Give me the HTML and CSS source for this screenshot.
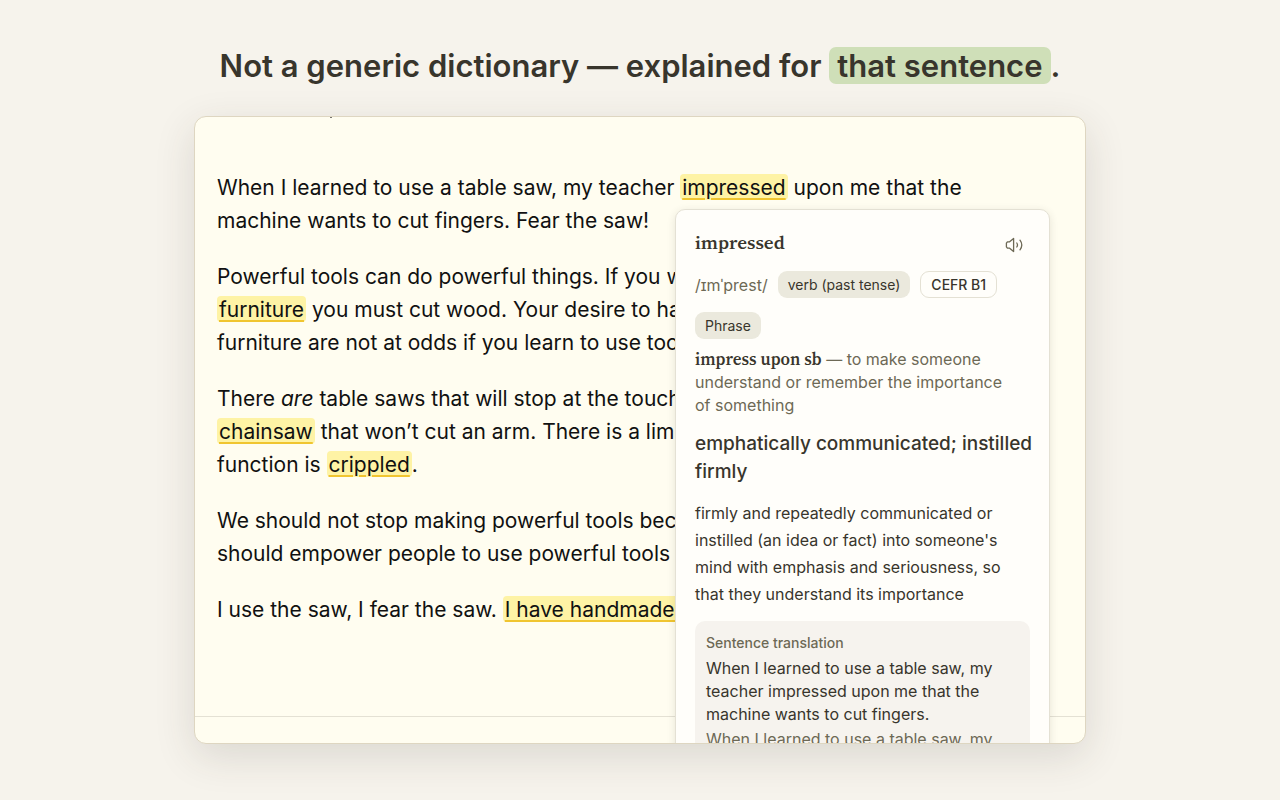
FILE: index.html
```html
<!doctype html>
<html lang="en">
    <head>
        <meta charset="utf-8">
        <title>Explained for that sentence</title>
        <link rel="stylesheet" href="styles.css">
    </head>
    <body>
        <h1>Not a generic dictionary — explained for <span class="accent">that sentence</span>.</h1>

        <div class="reader">
            <article>
                <p>When I learned to use a table saw, my teacher <mark>impressed</mark> upon me that the<br>
                machine wants to cut fingers. Fear the saw!</p>
                <p>Powerful tools can do powerful things. If you w<br>
                <mark>furniture</mark> you must cut wood. Your desire to ha<br>
                furniture are not at odds if you learn to use too</p>
                <p>There <em>are</em> table saws that will stop at the touch<br>
                <mark>chainsaw</mark> that won’t cut an arm. There is a limi<br>
                function is <mark>crippled</mark>.</p>
                <p>We should not stop making powerful tools bec<br>
                should empower people to use powerful tools s</p>
                <p>I use the saw, I fear the saw. <mark>I have handmade f</mark></p>
            </article>
            <hr>

            <div class="popup">
                <div class="popupHead">
                    <h2>impressed</h2>
                    <button type="button" aria-label="Play pronunciation">
                        <svg width="20" height="20" viewBox="0 0 20 20" fill="none" stroke="currentColor" stroke-width="1.3" stroke-linecap="round" stroke-linejoin="round">
                            <path d="M2.4 6.8h2.2L8.6 3.4v13.2l-4-3.4H2.4l-1-1.4V8.2z" />
                            <path d="M11.8 8q1.4 2 0 4M15 5.2q3.6 4.8 0 9.6" />
                        </svg>
                    </button>
                </div>
                <div class="tags">
                    <span class="ipa">/ɪmˈprest/</span>
                    <span class="tag">verb (past tense)</span>
                    <span class="tag outline">CEFR B1</span>
                </div>
                <div class="tags phraseTag">
                    <span class="tag">Phrase</span>
                </div>
                <p class="phrase"><b>impress upon sb</b> — to make someone understand or remember the importance of something</p>
                <h3>emphatically communicated; instilled firmly</h3>
                <p class="meaning">firmly and repeatedly communicated or instilled (an idea or fact) into someone's mind with emphasis and seriousness, so that they understand its importance</p>
                <div class="translation">
                    <h4>Sentence translation</h4>
                    <p>When I learned to use a table saw, my teacher impressed upon me that the machine wants to cut fingers.</p>
                    <p class="source">When I learned to use a table saw, my</p>
                </div>
            </div>
        </div>
    </body>
</html>
```
FILE: styles.css
```css
* {
    box-sizing: border-box;
}
body {
    margin: 0;
    min-height: 100vh;
    padding: 46px 40px 56px;
    display: flex;
    flex-direction: column;
    align-items: center;
    gap: 30px;
    background-color: #f6f3ec;
    color: #38352c;
    font-family: Inter, "Liberation Sans", sans-serif;
}
h1, h2, h3, h4, p {
    margin: 0;
}
h1 {
    font-size: 31px;
    line-height: 40px;
    font-weight: 600;
}
.accent {
    background-color: #cfdfb8;
    border-radius: 7px;
    padding: 0 8px;
}

.reader {
    position: relative;
    flex: 1;
    width: 100%;
    max-width: 892px;
    display: flex;
    flex-direction: column;
    overflow: hidden;
    background-color: #fffdf0;
    border: 1px solid #ded6c1;
    border-radius: 12px;
    box-shadow: 0 12px 40px rgba(56, 53, 44, 0.14);
}
/* descender of the line scrolled off the top */
.reader::before {
    content: "";
    position: absolute;
    top: 0;
    left: 135px;
    width: 2px;
    height: 1px;
    background-color: #77756f;
}
article {
    flex: 1;
    padding: 54px 22px 0;
    display: flex;
    flex-direction: column;
    gap: 23px;
    color: #111;
    font-size: 21px;
    line-height: 33px;
    white-space: nowrap;
}
mark {
    color: inherit;
    background-color: #fef3a5;
    border-radius: 4px;
    padding: 1px 2px 0;
    text-decoration: underline 2px #f0c530;
    text-underline-offset: 3px;
}
.reader hr {
    width: 100%;
    margin: 0 0 26px;
    border: 0;
    border-top: 1px solid #e4e1d4;
}

.popup {
    position: absolute;
    top: 92px;
    left: 480px;
    width: 375px;
    padding: 19px;
    background-color: #fffefa;
    border: 1px solid #e4e1d4;
    border-radius: 10px;
    box-shadow: 0 2px 8px rgba(56, 53, 44, 0.12);
}
.popupHead {
    display: flex;
    justify-content: space-between;
    height: 30px;
    padding-right: 5px;
}
.popup h2, .phrase b {
    font-family: "Source Serif 4", "Liberation Serif", serif;
    font-weight: 600;
}
.popup h2 {
    font-size: 19px;
    line-height: 26px;
}
.popup button {
    width: 20px;
    height: 20px;
    margin-top: 6px;
    padding: 0;
    border: 0;
    background: none;
    color: #6d6955;
}
.tags {
    display: flex;
    align-items: center;
    gap: 10px;
    margin-top: 12px;
}
.ipa {
    color: #6d6955;
    font-size: 16px;
}
.tag {
    padding: 0 10px;
    border-radius: 9px;
    background-color: #ebe9dd;
    font-size: 14px;
    line-height: 27px;
}
.outline {
    border: 1px solid #e4e1d4;
    background: none;
    line-height: 25px;
    font-weight: 500;
}
.phraseTag {
    margin: 14px 0 9px;
}
.phrase {
    padding-right: 16px;
    color: #6d6955;
    font-size: 16px;
    line-height: 23px;
}
.phrase b {
    color: #38352c;
    font-size: 17px;
    line-height: 20px;
}
.popup h3 {
    margin: 13px -6px 0 0;
    font-size: 19px;
    line-height: 28px;
    font-weight: 500;
}
.meaning {
    margin-top: 14px;
    font-size: 16px;
    line-height: 27px;
}
.translation {
    margin-top: 13px;
    padding: 12px 11px;
    background-color: #f6f3ee;
    border-radius: 10px;
    font-size: 16px;
    line-height: 23px;
}
.translation h4 {
    margin-bottom: 4px;
    color: #6d6955;
    font-size: 14px;
    line-height: 20px;
    font-weight: 500;
}
.source {
    margin-top: 2px;
    color: #6d6955;
}
```
